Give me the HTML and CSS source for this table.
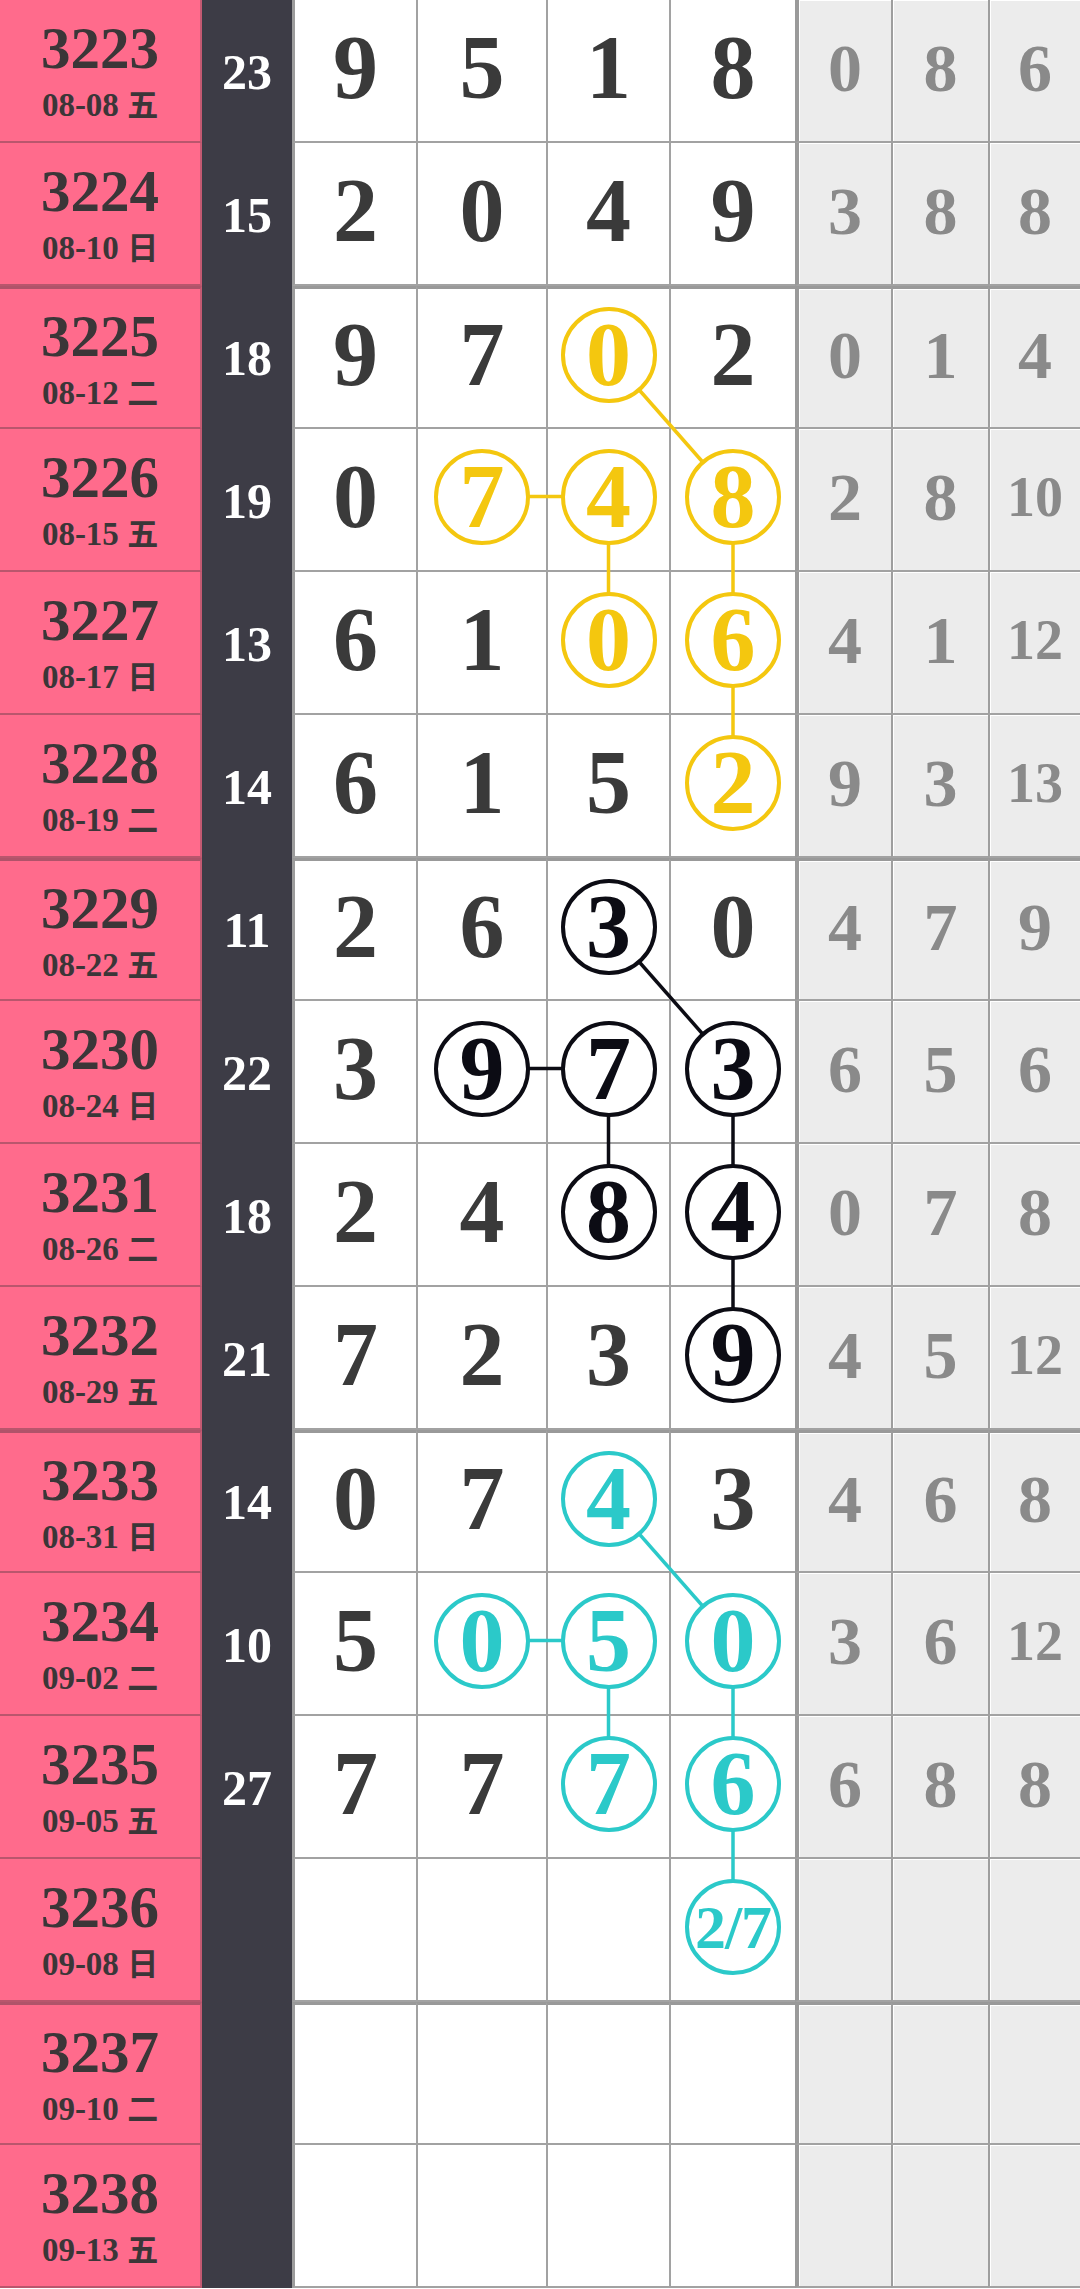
FILE: index.html
```html
<!DOCTYPE html>
<html lang="zh">
<head>
<meta charset="utf-8">
<title>走势图</title>
<link rel="stylesheet" href="styles.css">
</head>
<body>
<div class="board">
  <div class="row">
    <div class="c-issue"><span class="num">3223</span><span class="date">08-08 <span class="wd">五</span></span></div>
    <div class="c-sum">23</div>
    <div class="c-d c-d1">9</div><div class="c-d">5</div><div class="c-d">1</div><div class="c-d">8</div>
    <div class="c-g c-g1">0</div><div class="c-g">8</div><div class="c-g">6</div>
  </div>
  <div class="row">
    <div class="c-issue"><span class="num">3224</span><span class="date">08-10 <span class="wd">日</span></span></div>
    <div class="c-sum">15</div>
    <div class="c-d c-d1">2</div><div class="c-d">0</div><div class="c-d">4</div><div class="c-d">9</div>
    <div class="c-g c-g1">3</div><div class="c-g">8</div><div class="c-g">8</div>
  </div>

  <div class="row grp">
    <div class="c-issue"><span class="num">3225</span><span class="date">08-12 <span class="wd">二</span></span></div>
    <div class="c-sum">18</div>
    <div class="c-d c-d1">9</div><div class="c-d">7</div><div class="c-d"><span class="ring ring-y">0</span></div><div class="c-d">2</div>
    <div class="c-g c-g1">0</div><div class="c-g">1</div><div class="c-g">4</div>
  </div>
  <div class="row">
    <div class="c-issue"><span class="num">3226</span><span class="date">08-15 <span class="wd">五</span></span></div>
    <div class="c-sum">19</div>
    <div class="c-d c-d1">0</div><div class="c-d"><span class="ring ring-y">7</span></div><div class="c-d"><span class="ring ring-y">4</span></div><div class="c-d"><span class="ring ring-y">8</span></div>
    <div class="c-g c-g1">2</div><div class="c-g">8</div><div class="c-g two">10</div>
  </div>
  <div class="row">
    <div class="c-issue"><span class="num">3227</span><span class="date">08-17 <span class="wd">日</span></span></div>
    <div class="c-sum">13</div>
    <div class="c-d c-d1">6</div><div class="c-d">1</div><div class="c-d"><span class="ring ring-y">0</span></div><div class="c-d"><span class="ring ring-y">6</span></div>
    <div class="c-g c-g1">4</div><div class="c-g">1</div><div class="c-g two">12</div>
  </div>
  <div class="row">
    <div class="c-issue"><span class="num">3228</span><span class="date">08-19 <span class="wd">二</span></span></div>
    <div class="c-sum">14</div>
    <div class="c-d c-d1">6</div><div class="c-d">1</div><div class="c-d">5</div><div class="c-d"><span class="ring ring-y">2</span></div>
    <div class="c-g c-g1">9</div><div class="c-g">3</div><div class="c-g two">13</div>
  </div>

  <div class="row grp">
    <div class="c-issue"><span class="num">3229</span><span class="date">08-22 <span class="wd">五</span></span></div>
    <div class="c-sum">11</div>
    <div class="c-d c-d1">2</div><div class="c-d">6</div><div class="c-d"><span class="ring ring-k">3</span></div><div class="c-d">0</div>
    <div class="c-g c-g1">4</div><div class="c-g">7</div><div class="c-g">9</div>
  </div>
  <div class="row">
    <div class="c-issue"><span class="num">3230</span><span class="date">08-24 <span class="wd">日</span></span></div>
    <div class="c-sum">22</div>
    <div class="c-d c-d1">3</div><div class="c-d"><span class="ring ring-k">9</span></div><div class="c-d"><span class="ring ring-k">7</span></div><div class="c-d"><span class="ring ring-k">3</span></div>
    <div class="c-g c-g1">6</div><div class="c-g">5</div><div class="c-g">6</div>
  </div>
  <div class="row">
    <div class="c-issue"><span class="num">3231</span><span class="date">08-26 <span class="wd">二</span></span></div>
    <div class="c-sum">18</div>
    <div class="c-d c-d1">2</div><div class="c-d">4</div><div class="c-d"><span class="ring ring-k">8</span></div><div class="c-d"><span class="ring ring-k">4</span></div>
    <div class="c-g c-g1">0</div><div class="c-g">7</div><div class="c-g">8</div>
  </div>
  <div class="row">
    <div class="c-issue"><span class="num">3232</span><span class="date">08-29 <span class="wd">五</span></span></div>
    <div class="c-sum">21</div>
    <div class="c-d c-d1">7</div><div class="c-d">2</div><div class="c-d">3</div><div class="c-d"><span class="ring ring-k">9</span></div>
    <div class="c-g c-g1">4</div><div class="c-g">5</div><div class="c-g two">12</div>
  </div>

  <div class="row grp">
    <div class="c-issue"><span class="num">3233</span><span class="date">08-31 <span class="wd">日</span></span></div>
    <div class="c-sum">14</div>
    <div class="c-d c-d1">0</div><div class="c-d">7</div><div class="c-d"><span class="ring ring-c">4</span></div><div class="c-d">3</div>
    <div class="c-g c-g1">4</div><div class="c-g">6</div><div class="c-g">8</div>
  </div>
  <div class="row">
    <div class="c-issue"><span class="num">3234</span><span class="date">09-02 <span class="wd">二</span></span></div>
    <div class="c-sum">10</div>
    <div class="c-d c-d1">5</div><div class="c-d"><span class="ring ring-c">0</span></div><div class="c-d"><span class="ring ring-c">5</span></div><div class="c-d"><span class="ring ring-c">0</span></div>
    <div class="c-g c-g1">3</div><div class="c-g">6</div><div class="c-g two">12</div>
  </div>
  <div class="row">
    <div class="c-issue"><span class="num">3235</span><span class="date">09-05 <span class="wd">五</span></span></div>
    <div class="c-sum">27</div>
    <div class="c-d c-d1">7</div><div class="c-d">7</div><div class="c-d"><span class="ring ring-c">7</span></div><div class="c-d"><span class="ring ring-c">6</span></div>
    <div class="c-g c-g1">6</div><div class="c-g">8</div><div class="c-g">8</div>
  </div>
  <div class="row">
    <div class="c-issue"><span class="num">3236</span><span class="date">09-08 <span class="wd">日</span></span></div>
    <div class="c-sum"></div>
    <div class="c-d c-d1"></div><div class="c-d"></div><div class="c-d"></div><div class="c-d"><span class="ring ring-c ring-sm">2/7</span></div>
    <div class="c-g c-g1"></div><div class="c-g"></div><div class="c-g"></div>
  </div>

  <div class="row grp">
    <div class="c-issue"><span class="num">3237</span><span class="date">09-10 <span class="wd">二</span></span></div>
    <div class="c-sum"></div>
    <div class="c-d c-d1"></div><div class="c-d"></div><div class="c-d"></div><div class="c-d"></div>
    <div class="c-g c-g1"></div><div class="c-g"></div><div class="c-g"></div>
  </div>
  <div class="row">
    <div class="c-issue"><span class="num">3238</span><span class="date">09-13 <span class="wd">五</span></span></div>
    <div class="c-sum"></div>
    <div class="c-d c-d1"></div><div class="c-d"></div><div class="c-d"></div><div class="c-d"></div>
    <div class="c-g c-g1"></div><div class="c-g"></div><div class="c-g"></div>
  </div>

  <svg class="links" width="1080" height="2288" viewBox="0 0 1080 2288" aria-hidden="true">
    <g class="lk-y">
      <line x1="608.5" y1="355" x2="733" y2="496.5"/>
      <line x1="482" y1="496.5" x2="608.5" y2="496.5"/>
      <line x1="608.5" y1="496.5" x2="608.5" y2="639.5"/>
      <line x1="733" y1="496.5" x2="733" y2="782.5"/>
    </g>
    <g class="lk-k">
      <line x1="608.5" y1="927" x2="733" y2="1068.5"/>
      <line x1="482" y1="1068.5" x2="608.5" y2="1068.5"/>
      <line x1="608.5" y1="1068.5" x2="608.5" y2="1211.5"/>
      <line x1="733" y1="1068.5" x2="733" y2="1354.5"/>
    </g>
    <g class="lk-c">
      <line x1="608.5" y1="1499" x2="733" y2="1640.5"/>
      <line x1="482" y1="1640.5" x2="608.5" y2="1640.5"/>
      <line x1="608.5" y1="1640.5" x2="608.5" y2="1783.5"/>
      <line x1="733" y1="1640.5" x2="733" y2="1926.5"/>
    </g>
  </svg>
</div>
</body>
</html>
```
FILE: styles.css
```css
html, body {
  margin: 0;
  padding: 0;
  background: #ffffff;
}

body {
  font-family: "Liberation Serif", "Noto Sans CJK SC", serif;
  font-weight: bold;
  overflow: hidden;
}

.board {
  position: relative;
  width: 1080px;
}

.row {
  display: grid;
  grid-template-columns: 202px 90px 124px 130px 123px 126px 96px 97px 92px;
  height: 143px;
}

.row > div {
  box-sizing: border-box;
  display: flex;
  align-items: center;
  justify-content: center;
  min-width: 0;
}

/* issue column */
.c-issue {
  background: #ff6b8c;
  color: #3b3638;
  flex-direction: column;
  gap: 8px;
  border-right: 2px solid #c45a72;
  border-bottom: 2px solid #b9566d;
}

.c-issue .num {
  font-size: 59px;
  line-height: 59px;
}

.c-issue .date {
  font-size: 33px;
  line-height: 33px;
  white-space: nowrap;
}

.c-issue .wd {
  font-family: "Noto Sans CJK SC", sans-serif;
  font-size: 31px;
  font-weight: 700;
}

/* sum column */
.c-sum {
  background: #3d3c46;
  color: #ffffff;
  font-size: 50px;
  line-height: 50px;
}

/* digit columns */
.c-d {
  background: #ffffff;
  color: #3a3a3a;
  font-size: 90px;
  line-height: 90px;
  border-left: 2px solid #a2a2a2;
  border-bottom: 2px solid #a2a2a2;
  padding-bottom: 6px;
}

.c-d1 {
  border-left: 3px solid #9c9c9c;
}

/* gray statistic columns */
.c-g {
  background: #ececec;
  color: #8a8a8a;
  font-size: 68px;
  line-height: 68px;
  border-left: 2px solid #9e9e9e;
  border-bottom: 2px solid #a2a2a2;
  padding-bottom: 6px;
  box-shadow: inset 1px 1px 0 #ffffff;
}

.c-g1 {
  border-left: 4px solid #9a9a9a;
}

.c-g.two {
  font-size: 56px;
}

/* group separators */
.grp .c-issue {
  border-top: 3px solid #b0536a;
}

.grp .c-d,
.grp .c-g {
  border-top: 3px solid #999999;
}

/* circled digits */
.ring {
  position: relative;
  z-index: 2;
  box-sizing: border-box;
  width: 96px;
  height: 96px;
  border: 4px solid currentColor;
  border-radius: 50%;
  background: #ffffff;
  display: flex;
  align-items: center;
  justify-content: center;
  font-size: 90px;
  line-height: 1;
}

.ring-y { color: #f4c70f; }
.ring-k { color: #0c0c14; }
.ring-c { color: #2bc9c9; }

.ring-sm {
  font-size: 62px;
  letter-spacing: -1px;
}

/* connecting lines */
.links {
  position: absolute;
  top: 0;
  left: 0;
  z-index: 1;
  pointer-events: none;
}

.links line {
  stroke-width: 3.5;
  stroke-linecap: butt;
}

.lk-y line { stroke: #f4c70f; }
.lk-k line { stroke: #0c0c14; }
.lk-c line { stroke: #2bc9c9; }
```
